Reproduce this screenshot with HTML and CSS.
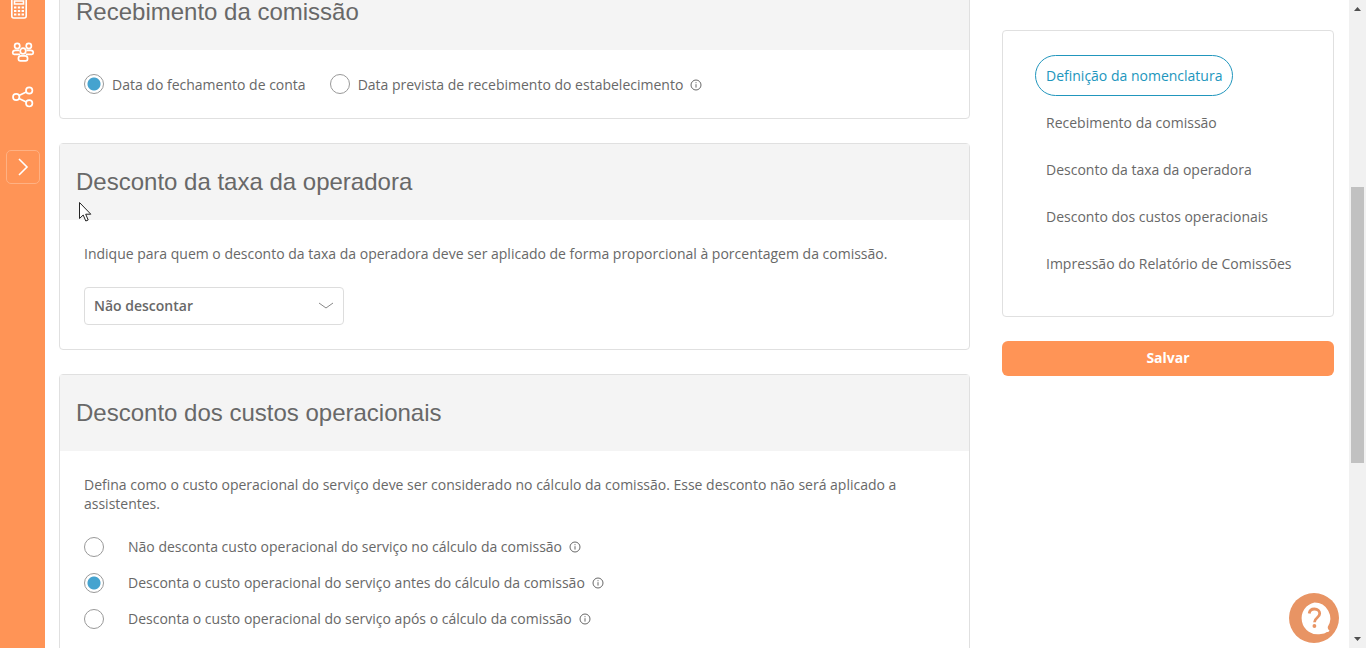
FILE: index.html
```html
<!DOCTYPE html>
<html lang="pt-BR">
<head>
<meta charset="utf-8">
<meta name="viewport" content="width=device-width, initial-scale=1">
<title>Configurações de comissão</title>
<link rel="stylesheet" href="styles.css">
</head>
<body>
<svg class="sprite" aria-hidden="true">
  <symbol id="info" viewBox="0 0 12 12">
    <circle cx="6" cy="6" r="5" fill="none" stroke="currentColor"/>
    <path d="M6 5.2v3.4M6 3.2v1" fill="none" stroke="currentColor"/>
  </symbol>
</svg>
<div class="app">
  <nav class="sidebar" aria-label="Menu principal">
    <a class="side-link" href="#" aria-label="Financeiro">
      <svg width="24" height="24" viewBox="0 0 24 24" fill="none" stroke="#fff" stroke-width="1.6">
        <rect x="0.800" y="1.800" width="14.400" height="20.200" rx="2"/>
        <path d="M3.500 5h9v3h-9z"/>
        <path d="M3 11.500h2.400m1.400 0h2.400m1.400 0h2.400M3 15h2.400m1.400 0h2.400m1.400 0h2.400M3 18.500h2.400m1.400 0h2.400m1.400 0h2.400" stroke-width="2"/>
      </svg>
    </a>
    <a class="side-link" href="#" aria-label="Equipe">
      <svg width="24" height="24" viewBox="0 0 24 24" fill="none" stroke="#fff" stroke-width="1.7" stroke-linejoin="round">
        <circle cx="6.2" cy="6" r="2.6"/>
        <circle cx="17.8" cy="6" r="2.6"/>
        <circle cx="12" cy="11" r="2.8"/>
        <path d="M8.5 10.3H4.3c-1.7 0-2.6 1-2.6 2.5 0 1 .6 1.6 1.5 1.6h6M15.5 10.3h4.2c1.7 0 2.6 1 2.6 2.5 0 1-.6 1.6-1.5 1.6h-6"/>
        <path d="M9.8 15.8h4.4c1.6 0 2.4 1 2.4 2.6 0 1.5-.8 2.4-2 2.4H9.4c-1.2 0-2-.9-2-2.4 0-1.600.8-2.600 2.400-2.600z"/>
      </svg>
    </a>
    <a class="side-link" href="#" aria-label="Compartilhar">
      <svg width="24" height="24" viewBox="0 0 24 24" fill="none" stroke="#fff" stroke-width="1.7">
        <circle cx="5.200" cy="13" r="3.200"/>
        <circle cx="18.200" cy="6.500" r="3.200"/>
        <circle cx="18.200" cy="19.300" r="3.200"/>
        <path d="M8 11.500l7.300-3.600M8 14.500l7.300 3.500"/>
      </svg>
    </a>
    <button class="expand" type="button" aria-label="Expandir menu">
      <svg width="12" height="18" viewBox="0 0 12 18" fill="none" stroke="#fff" stroke-width="1.600"><path d="M2 1l8 8-8 8"/></svg>
    </button>
  </nav>

  <div class="content">
    <main class="sections">
      <section class="card">
        <h2 class="card-title">Recebimento da comissão</h2>
        <div class="card-body options-row">
          <label class="option"><input class="radio" type="radio" name="recebimento" checked><span>Data do fechamento de conta</span></label>
          <label class="option"><input class="radio" type="radio" name="recebimento"><span>Data prevista de recebimento do estabelecimento<svg class="info"><use href="#info"/></svg></span></label>
        </div>
      </section>

      <section class="card">
        <h2 class="card-title">Desconto da taxa da operadora</h2>
        <div class="card-body">
          <label class="text" for="taxa">Indique para quem o desconto da taxa da operadora deve ser aplicado de forma proporcional à porcentagem da comissão.</label>
          <div class="select-wrap">
            <select class="select" id="taxa"><option>Não descontar</option></select>
            <svg class="chevron" width="16" height="8" viewBox="0 0 16 8" fill="none" stroke="#888"><path d="M1 1l7 5 7-5"/></svg>
          </div>
        </div>
      </section>

      <section class="card">
        <h2 class="card-title">Desconto dos custos operacionais</h2>
        <div class="card-body">
          <p class="text">Defina como o custo operacional do serviço deve ser considerado no cálculo da comissão. Esse desconto não será aplicado a assistentes.</p>
          <div class="options-list">
            <label class="option"><input class="radio" type="radio" name="custos"><span>Não desconta custo operacional do serviço no cálculo da comissão<svg class="info"><use href="#info"/></svg></span></label>
            <label class="option"><input class="radio" type="radio" name="custos" checked><span>Desconta o custo operacional do serviço antes do cálculo da comissão<svg class="info"><use href="#info"/></svg></span></label>
            <label class="option"><input class="radio" type="radio" name="custos"><span>Desconta o custo operacional do serviço após o cálculo da comissão<svg class="info"><use href="#info"/></svg></span></label>
          </div>
        </div>
      </section>
    </main>

    <aside class="aside">
      <nav class="index" aria-label="Seções">
        <a class="index-link active" href="#">Definição da nomenclatura</a>
        <a class="index-link" href="#">Recebimento da comissão</a>
        <a class="index-link" href="#">Desconto da taxa da operadora</a>
        <a class="index-link" href="#">Desconto dos custos operacionais</a>
        <a class="index-link" href="#">Impressão do Relatório de Comissões</a>
      </nav>
      <button class="save" type="button">Salvar</button>
    </aside>
  </div>

  <div class="scrollbar" aria-hidden="true">
    <svg width="9" height="5" viewBox="0 0 9 5"><path d="M1 5l3.500-4L8 5z" fill="#505050"/></svg>
    <div class="track"><div class="thumb"></div></div>
    <svg width="9" height="5" viewBox="0 0 9 5"><path d="M1 0l3.500 4L8 0z" fill="#505050"/></svg>
  </div>
</div>

<button class="help" type="button" aria-label="Ajuda">
  <svg width="50" height="50" viewBox="0 0 50 50">
    <circle cx="25" cy="25" r="25" fill="#e89464"/>
    <path d="M25.500 9.500a15.800 15.800 0 0 1 13.300 24.200c-.3 1.500.3 2.600 1.700 3.800-.7 1.200-1.300 1.600-2.600 1.500-1.500 1.300-3.800 2-6 2A15.800 15.800 0 1 1 25.500 9.500z" fill="#fff"/>
    <path d="M20.200 20.500c.4-3 2.300-4.500 5.200-4.500 3.200 0 5.300 1.800 5.300 4.500 0 4.500-5.200 4-5.200 8.700" fill="none" stroke="#e89464" stroke-width="2.800"/>
    <circle cx="25.400" cy="33" r="1.900" fill="#e89464"/>
  </svg>
</button>

<svg class="pointer" width="13" height="20" viewBox="0 0 13 20" aria-hidden="true">
  <path d="M.5.500v16l3.700-3.500 2.600 6 2.400-1-2.500-5.800h5.100z" fill="#fff" stroke="#222"/>
</svg>
</body>
</html>
```
FILE: styles.css
```css
* {
  box-sizing: border-box;
}

body {
  margin: 0;
  background: #fff;
  color: #686868;
  font: 14px/19px "Open Sans", sans-serif;
}

button,
select {
  font: inherit;
  color: inherit;
}

.sprite {
  display: none;
}

.app {
  display: flex;
  height: 100vh;
  overflow: hidden;
}

.sidebar {
  flex: none;
  display: flex;
  flex-direction: column;
  align-items: center;
  width: 45px;
  margin-top: -4px;
  background: #ff9456;
}

.side-link {
  display: flex;
  margin-bottom: 20px;
}

.expand {
  display: flex;
  align-items: center;
  justify-content: center;
  width: 34px;
  height: 34px;
  margin-top: 22px;
  padding: 0;
  border: 1px solid #ffb183;
  border-radius: 5px;
  background: none;
}

/* Scrolled content area */
.content {
  flex: 1;
  display: grid;
  grid-template-columns: minmax(0, 1fr) 332px;
  align-items: start;
  gap: 32px;
  padding: 0 15px 0 14px;
}

.sections {
  display: grid;
  gap: 24px;
  margin-top: -27px;
}

.card,
.index {
  border: 1px solid #e0e0e0;
  border-radius: 4px;
}

.card-title {
  margin: 0;
  padding: 24px 16px;
  background: #f4f4f4;
  font: 24px/28px "Liberation Sans", Arial, sans-serif;
}

.card-body {
  display: grid;
  gap: 24px;
  padding: 24px;
}

.card-body.options-row {
  display: flex;
  flex-wrap: wrap;
}

.text {
  margin: 0;
}

.options-list {
  display: grid;
  gap: 16px;
}

.option {
  display: flex;
  align-items: center;
  gap: 8px;
  min-height: 20px;
}

.options-list .option {
  gap: 24px;
  line-height: 18px;
}

.radio {
  flex: none;
  appearance: none;
  width: 20px;
  height: 20px;
  margin: 0;
  border: 1px solid #999;
  border-radius: 50%;
  background: #fff;
}

.radio:checked {
  background: radial-gradient(circle, #45a3cf 6px, #fff 7px);
}

.info {
  width: 12px;
  height: 12px;
  margin-left: 7px;
  vertical-align: -1px;
}

.select-wrap {
  position: relative;
  width: 260px;
}

.select {
  appearance: none;
  display: block;
  width: 100%;
  height: 38px;
  padding: 0 9px 2px;
  border: 1px solid #ddd;
  border-radius: 4px;
  background: #fff;
  font-weight: 600;
}

.chevron {
  position: absolute;
  top: 15px;
  right: 10px;
  pointer-events: none;
}

.aside {
  display: grid;
  gap: 24px;
  padding-top: 30px;
}

.index {
  display: flex;
  flex-direction: column;
  align-items: flex-start;
  gap: 6px;
  padding: 24px 24px 32px 32px;
}

.index-link {
  padding: 10px;
  border: 1px solid transparent;
  border-radius: 21px;
  color: inherit;
  text-decoration: none;
}

.index-link.active {
  border-color: #2196bd;
  color: #2196bd;
}

.save {
  height: 35px;
  padding: 0 0 2px;
  border: 0;
  border-radius: 6px;
  background: #ff9456;
  color: #fff;
  font-weight: 700;
}

.scrollbar {
  flex: none;
  display: flex;
  flex-direction: column;
  align-items: center;
  width: 17px;
  padding: 6px 0;
  background: #f1f1f1;
}

.track {
  flex: 1;
  width: 13px;
  margin: 6px 0;
}

.thumb {
  height: 45%;
  margin-top: 170px;
  background: #c1c1c1;
}

.help {
  position: fixed;
  right: 27px;
  bottom: 5px;
  display: flex;
  padding: 0;
  border: 0;
  border-radius: 50%;
  background: none;
}

.pointer {
  position: absolute;
  top: 202px;
  left: 79px;
  pointer-events: none;
}
```
